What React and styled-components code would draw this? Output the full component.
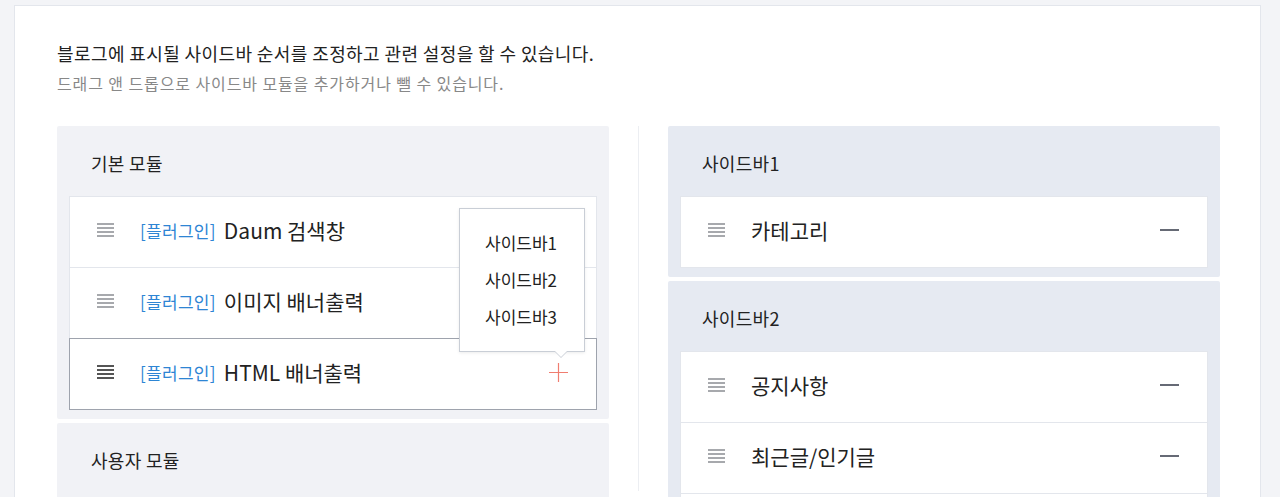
import React from "react";
import styled, { createGlobalStyle } from "styled-components";

const GlobalStyle = createGlobalStyle`
  body {
    margin: 0;
    background: #f3f4f7;
    font-family: "Noto Sans CJK KR", "Noto Sans", sans-serif;
    color: #222;
  }
`;

const Card = styled.div`
  margin: 5px 0 0 14px;
  width: 1247px;
  height: 520px;
  box-sizing: border-box;
  background: #fff;
  border: 1px solid #e3e6ec;
  padding: 32px 0 0 42px;
  overflow: hidden;
`;

const Title = styled.p`
  margin: 0;
  font-size: 18px;
  line-height: 30px;
  color: #222;
  letter-spacing: 0.4px;
`;

const SubTitle = styled.p`
  margin: 2px 0 0;
  font-size: 16px;
  line-height: 26px;
  color: #888;
  letter-spacing: 0.9px;
`;

const Columns = styled.div`
  display: grid;
  grid-template-columns: 552px 1px 552px;
  column-gap: 29px;
  margin-top: 30px;
`;

const Divider = styled.div`
  background: #eceef2;
  height: 365px;
`;

const Stack = styled.div`
  display: flex;
  flex-direction: column;
  gap: 4px;
`;

const Panel = styled.div`
  background: ${p => (p.$blue ? "#e6eaf2" : "#f1f2f6")};
  border-radius: 2px;
  padding: 0 12px 9px;
`;

const PanelHead = styled.div`
  height: 70px;
  box-sizing: border-box;
  padding: 3px 0 0 22px;
  display: flex;
  align-items: center;
  font-size: 18px;
  color: #222;
  letter-spacing: 0.3px;
`;

const Row = styled.div`
  position: relative;
  display: flex;
  align-items: center;
  height: 72px;
  box-sizing: border-box;
  background: #fff;
  border: 1px solid ${p => (p.$active ? "#9ea3ad" : "#e3e6ec")};
  padding: 0 0 4px 27px;
  z-index: ${p => (p.$active ? 1 : 0)};
  & + & {
    margin-top: -1px;
  }
`;

const Handle = styled.span`
  display: flex;
  flex-direction: column;
  gap: 2.5px;
  width: 17px;
  margin-right: 26px;
  span {
    height: 1.5px;
    background: ${p => (p.$dark ? "#555" : "#a7a9ad")};
  }
`;

const Tag = styled.span`
  font-size: 17px;
  color: #2e85d4;
  margin-right: 8px;
  letter-spacing: 0.3px;
`;

const Name = styled.span`
  font-size: 21px;
  color: #222;
`;

const Action = styled.span`
  margin-left: auto;
  margin-right: 28px;
  width: 19px;
  height: 19px;
  display: flex;
  align-items: center;
  justify-content: center;
`;

const MinusLine = styled.span`
  width: 19px;
  height: 1.5px;
  background: #666a75;
`;

const Popup = styled.div`
  position: absolute;
  right: 11px;
  bottom: 57px;
  width: 126px;
  box-sizing: border-box;
  background: #fff;
  border: 1px solid #c9ced6;
  box-shadow: 0 1px 3px rgba(0, 0, 0, 0.08);
  padding: 15px 0 16px 25px;
  z-index: 2;
  &::before,
  &::after {
    content: "";
    position: absolute;
    left: 94px;
    border: 7px solid transparent;
    border-bottom: none;
  }
  &::before {
    bottom: -7px;
    border-top-color: #c9ced6;
  }
  &::after {
    bottom: -6px;
    border-top-color: #fff;
  }
`;

const PopupItem = styled.div`
  font-size: 17px;
  line-height: 37px;
  color: #222;
`;

const Handlebars = ({ dark }) => (
  <Handle $dark={dark}>
    <span />
    <span />
    <span />
    <span />
  </Handle>
);

const Plus = () => (
  <svg width="19" height="19" viewBox="0 0 19 19">
    <path d="M9.5 0v19M0 9.5h19" stroke="#f07d70" strokeWidth="1.2" fill="none" />
  </svg>
);

const plugins = ["Daum 검색창", "이미지 배너출력", "HTML 배너출력"];

const App = () => {
  return (
    <>
      <GlobalStyle />
      <Card>
        <Title>블로그에 표시될 사이드바 순서를 조정하고 관련 설정을 할 수 있습니다.</Title>
        <SubTitle>드래그 앤 드롭으로 사이드바 모듈을 추가하거나 뺄 수 있습니다.</SubTitle>
        <Columns>
          <Stack>
            <Panel>
              <PanelHead>기본 모듈</PanelHead>
              {plugins.map((name, i) => {
                const active = i === plugins.length - 1;
                return (
                  <Row key={name} $active={active}>
                    <Handlebars dark={active} />
                    <Tag>[플러그인]</Tag>
                    <Name>{name}</Name>
                    {active && (
                      <>
                        <Popup>
                          <PopupItem>사이드바1</PopupItem>
                          <PopupItem>사이드바2</PopupItem>
                          <PopupItem>사이드바3</PopupItem>
                        </Popup>
                        <Action>
                          <Plus />
                        </Action>
                      </>
                    )}
                  </Row>
                );
              })}
            </Panel>
            <Panel>
              <PanelHead>사용자 모듈</PanelHead>
            </Panel>
          </Stack>
          <Divider />
          <Stack>
            <Panel $blue>
              <PanelHead>사이드바1</PanelHead>
              <Row>
                <Handlebars />
                <Name>카테고리</Name>
                <Action>
                  <MinusLine />
                </Action>
              </Row>
            </Panel>
            <Panel $blue>
              <PanelHead>사이드바2</PanelHead>
              {["공지사항", "최근글/인기글"].map(name => (
                <Row key={name}>
                  <Handlebars />
                  <Name>{name}</Name>
                  <Action>
                    <MinusLine />
                  </Action>
                </Row>
              ))}
              <Row />
            </Panel>
          </Stack>
        </Columns>
      </Card>
    </>
  );
};

export default App;
